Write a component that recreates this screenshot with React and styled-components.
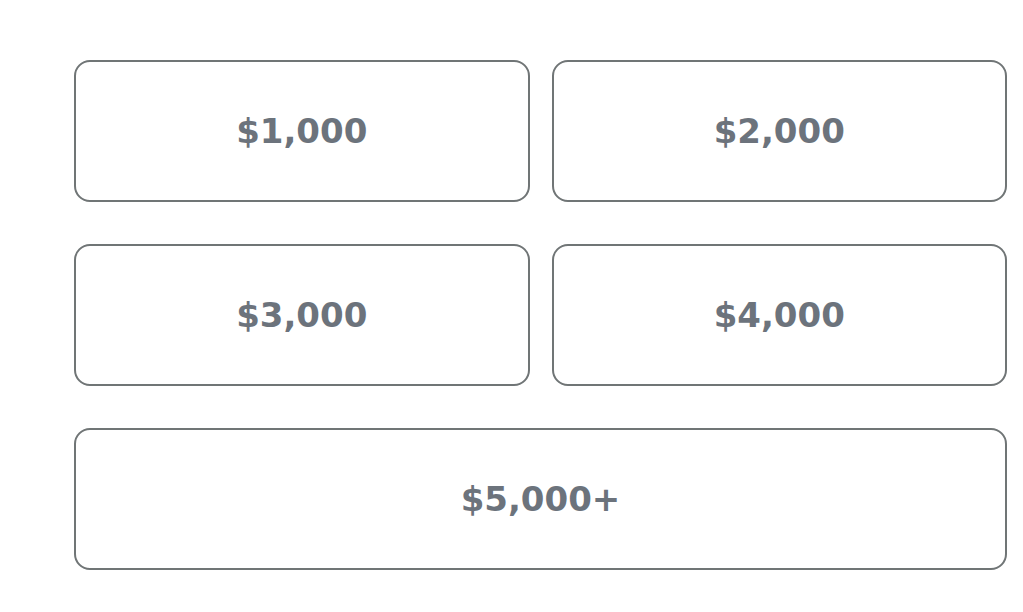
import React from "react";
import styled, { createGlobalStyle } from "styled-components";

const GlobalStyle = createGlobalStyle`
  body {
    margin: 0;
    background: #fff;
    font-family: "DejaVu Sans", "Liberation Sans", sans-serif;
  }
`;

const amounts = ["$1,000", "$2,000", "$3,000", "$4,000", "$5,000+"];

function App() {
  return (
    <>
      <GlobalStyle />
      <AmountGrid>
        {amounts.map((amount, i) => (
          <AmountButton key={amount} $wide={i === amounts.length - 1}>
            {amount}
          </AmountButton>
        ))}
      </AmountGrid>
    </>
  );
}

const AmountGrid = styled.div`
  display: grid;
  grid-template-columns: 1fr 1fr;
  column-gap: 22px;
  row-gap: 42px;
  padding: 60px 16px 0 74px;
`;

const AmountButton = styled.button`
  grid-column: ${(props) => (props.$wide ? "1 / span 2" : "auto")};
  height: 142px;
  display: flex;
  align-items: center;
  justify-content: center;
  background: #fff;
  border: 2px solid #707576;
  border-radius: 16px;
  color: #6c737c;
  font-family: "DejaVu Sans", sans-serif;
  font-weight: 700;
  font-size: 34px;
  cursor: pointer;
`;

export default App;
